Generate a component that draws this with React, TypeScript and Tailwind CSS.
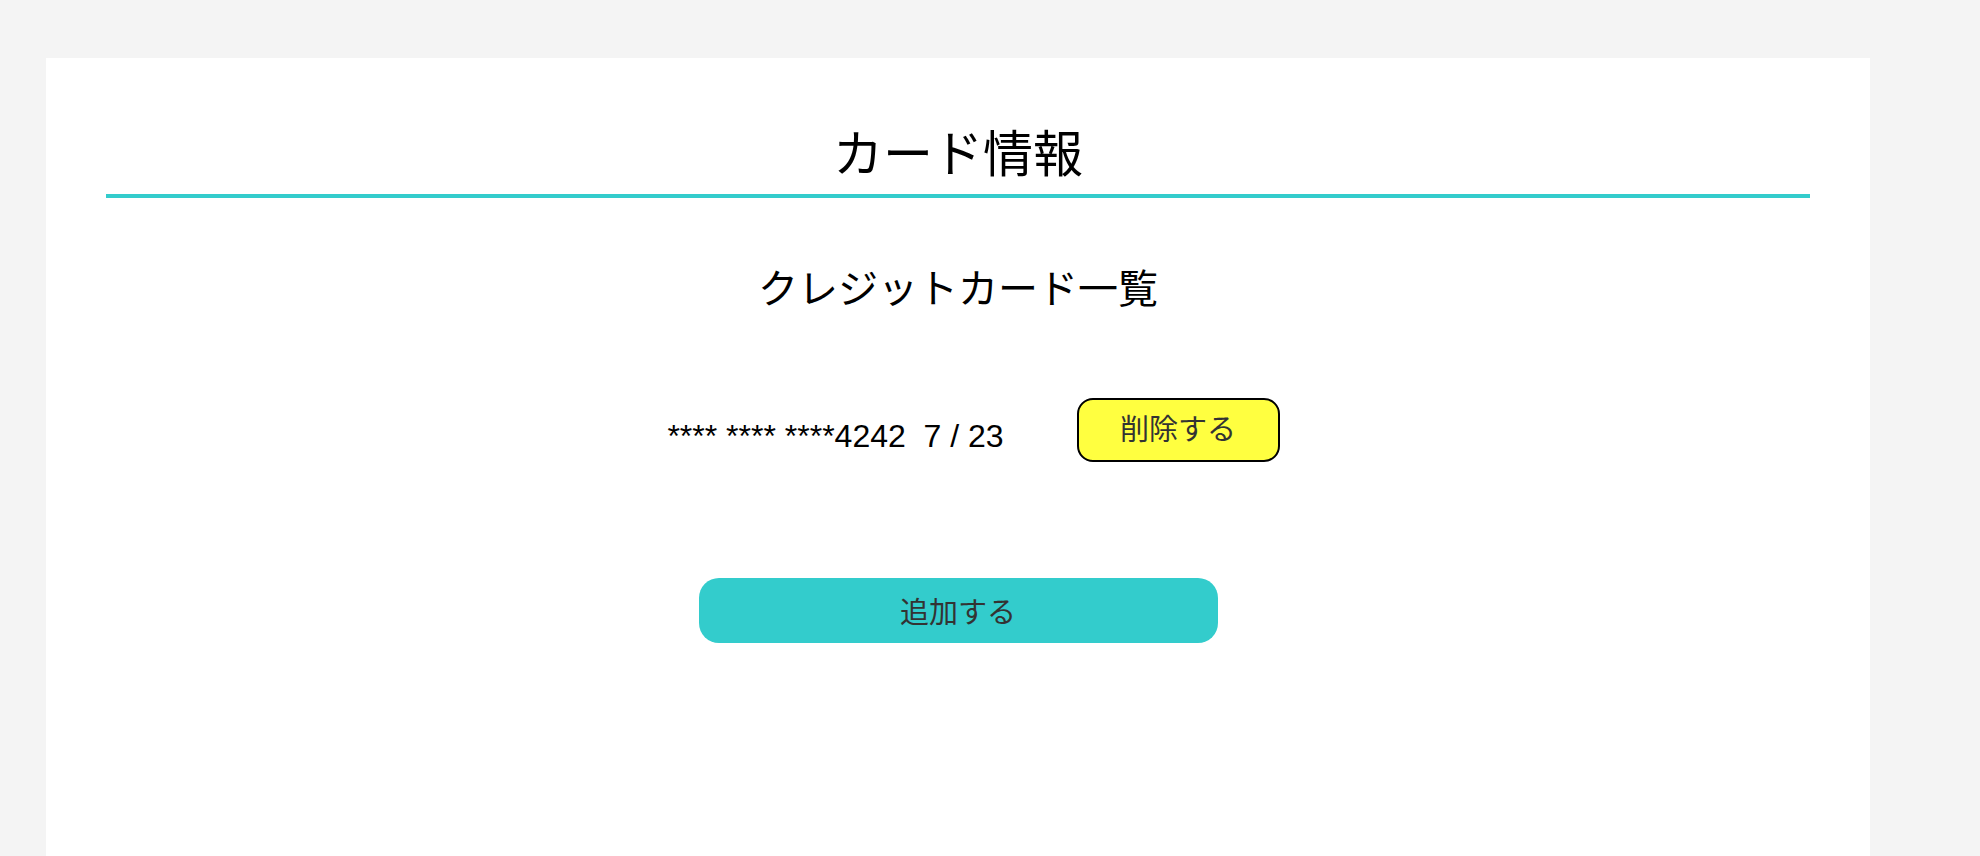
export default function App() {
  return (
    <div className="min-h-screen bg-[#f4f4f4] pt-[58px] pl-[46px]">
      <div className="w-[1824px] min-h-[798px] bg-white px-[60px]">
        {/* Title */}
        <h1 className="pt-[56px] pb-[8px] border-b-4 border-[#33cccc] text-center text-[50px] leading-[72px] text-black font-normal font-['Noto_Sans_CJK_JP',sans-serif]">
          カード情報
        </h1>

        {/* Subtitle */}
        <h2 className="mt-[58px] text-center text-[40px] leading-[60px] text-black font-normal font-['Noto_Sans_CJK_JP',sans-serif]">
          クレジットカード一覧
        </h2>

        {/* Card row */}
        <div className="mt-[82px] flex justify-center items-center">
          <p className="ml-[31px] mr-[73px] pt-3 text-[32px] text-black whitespace-pre font-['Liberation_Sans',Arial,sans-serif]">
            {"**** **** ****4242  7 / 23"}
          </p>
          <button className="w-[203px] h-[64px] pb-1 rounded-[16px] border-2 border-black bg-[#ffff40] text-[29px] text-[#333] font-['Noto_Sans_CJK_JP',sans-serif]">
            削除する
          </button>
        </div>

        {/* Add button */}
        <div className="mt-[116px] flex justify-center">
          <button className="w-[519px] h-[65px] rounded-[20px] bg-[#33cccc] text-[29px] text-[#333] font-['Noto_Sans_CJK_JP',sans-serif]">
            追加する
          </button>
        </div>
      </div>
    </div>
  );
}
